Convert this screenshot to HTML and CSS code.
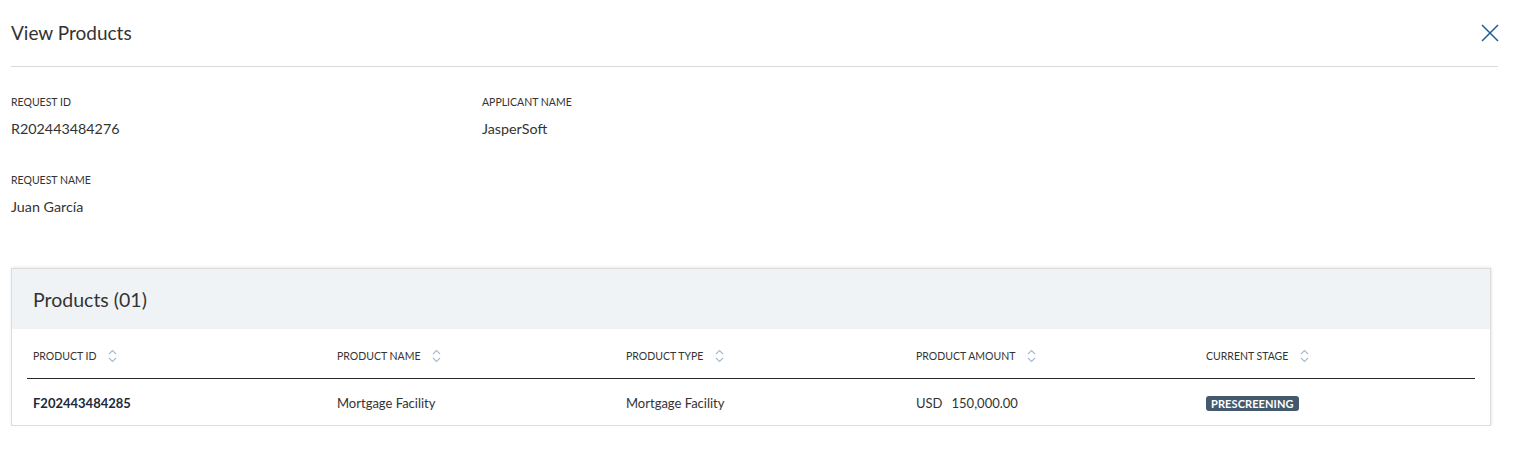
FILE: index.html
```html
<!DOCTYPE html>
<html>
<head>
<meta charset="utf-8">
<link rel="stylesheet" href="styles.css">
</head>
<body>
<div class="page">
  <header class="top">
    <h1 class="title">View Products</h1>
    <button class="close" aria-label="Close">
      <svg width="18" height="18" viewBox="0 0 18 18"><path d="M1 1L17 17M17 1L1 17" stroke="#1d5c99" stroke-width="1.5" fill="none"/></svg>
    </button>
  </header>
  <section class="info">
    <div class="field"><div class="label">REQUEST ID</div><div class="value">R202443484276</div></div>
    <div class="field"><div class="label">APPLICANT NAME</div><div class="value">JasperSoft</div></div>
    <div class="field"><div class="label">REQUEST NAME</div><div class="value">Juan García</div></div>
  </section>
  <section class="card">
    <div class="card-head">Products (01)</div>
    <table class="tbl">
      <thead>
        <tr>
          <th class="c1"><span>PRODUCT ID</span><svg class="sort" width="9" height="14" viewBox="0 0 9 14"><path d="M1 5L4.5 1.5L8 5M1 9L4.5 12.5L8 9" stroke="#a7b9d0" stroke-width="1.1" fill="none"/></svg></th>
          <th class="c2"><span>PRODUCT NAME</span><svg class="sort" width="9" height="14" viewBox="0 0 9 14"><path d="M1 5L4.5 1.5L8 5M1 9L4.5 12.5L8 9" stroke="#a7b9d0" stroke-width="1.1" fill="none"/></svg></th>
          <th class="c3"><span>PRODUCT TYPE</span><svg class="sort" width="9" height="14" viewBox="0 0 9 14"><path d="M1 5L4.5 1.5L8 5M1 9L4.5 12.5L8 9" stroke="#a7b9d0" stroke-width="1.1" fill="none"/></svg></th>
          <th class="c4"><span>PRODUCT AMOUNT</span><svg class="sort" width="9" height="14" viewBox="0 0 9 14"><path d="M1 5L4.5 1.5L8 5M1 9L4.5 12.5L8 9" stroke="#a7b9d0" stroke-width="1.1" fill="none"/></svg></th>
          <th class="c5"><span>CURRENT STAGE</span><svg class="sort" width="9" height="14" viewBox="0 0 9 14"><path d="M1 5L4.5 1.5L8 5M1 9L4.5 12.5L8 9" stroke="#a7b9d0" stroke-width="1.1" fill="none"/></svg></th>
        </tr>
      </thead>
      <tbody>
        <tr>
          <td class="pid">F202443484285</td>
          <td>Mortgage Facility</td>
          <td>Mortgage Facility</td>
          <td><span class="cur">USD</span>150,000.00</td>
          <td><span class="badge">PRESCREENING</span></td>
        </tr>
      </tbody>
    </table>
  </section>
</div>
</body>
</html>
```
FILE: styles.css
```css
* { box-sizing: border-box; }
html, body { margin: 0; padding: 0; background: #fff; }
body { font-family: "Lato", "Open Sans", sans-serif; color: #333; }
.page { padding: 0 27px 0 11px; }
.top {
  height: 67px;
  display: flex;
  align-items: center;
  justify-content: space-between;
  border-bottom: 1px solid #d9d9d9;
}
.title { margin: 0; font-size: 19px; font-weight: 400; color: #333; padding-bottom: 1px; }
.close { background: none; border: 0; padding: 0; margin-right: -1px; display: flex; cursor: pointer; }
.info {
  display: grid;
  grid-template-columns: 471px 471px;
  row-gap: 35px;
  padding-top: 28px;
}
.label { font-size: 10.5px; color: #333; line-height: 14px; }
.value { font-size: 14.3px; color: #333; margin-top: 11px; line-height: 18px; }
.card {
  margin-top: 52px;
  margin-right: 7px;
  border: 1px solid #dcdcdc;
  box-shadow: 0 -1px 3px rgba(0,0,0,0.06), 1px 0 3px rgba(0,0,0,0.06);
  background: #fff;
}
.card-head {
  background: #f0f3f6;
  height: 60px;
  display: flex;
  align-items: center;
  padding-left: 21px;
  font-size: 19.5px;
  color: #333;
}
.tbl {
  width: calc(100% - 30px);
  margin: 0 15px;
  border-collapse: collapse;
  table-layout: fixed;
}
.tbl th {
  text-align: left;
  font-weight: 400;
  font-size: 10.5px;
  color: #333;
  height: 49px;
  padding: 5px 6px 0;
  border-bottom: 1.5px solid #2b2b2b;
  white-space: nowrap;
}
.tbl th span { vertical-align: middle; }
.c1 { width: 304px; }
.c2 { width: 289px; }
.c3 { width: 290px; }
.c4 { width: 290px; }
.sort {
  display: inline-block;
  vertical-align: middle;
  margin-left: 12px;
}
.tbl td {
  height: 47px;
  padding: 3px 6px 0;
  font-size: 13px;
  color: #333;
  white-space: nowrap;
}
.tbl td.pid { font-weight: 700; color: #1e2a3a; }
.cur { margin-right: 9px; }
.badge {
  display: inline-block;
  background: #44596e;
  color: #fff;
  font-weight: 700;
  font-size: 11px;
  line-height: 15px;
  padding: 0 5px;
  border-radius: 3px;
  letter-spacing: 0.1px;
}
```
